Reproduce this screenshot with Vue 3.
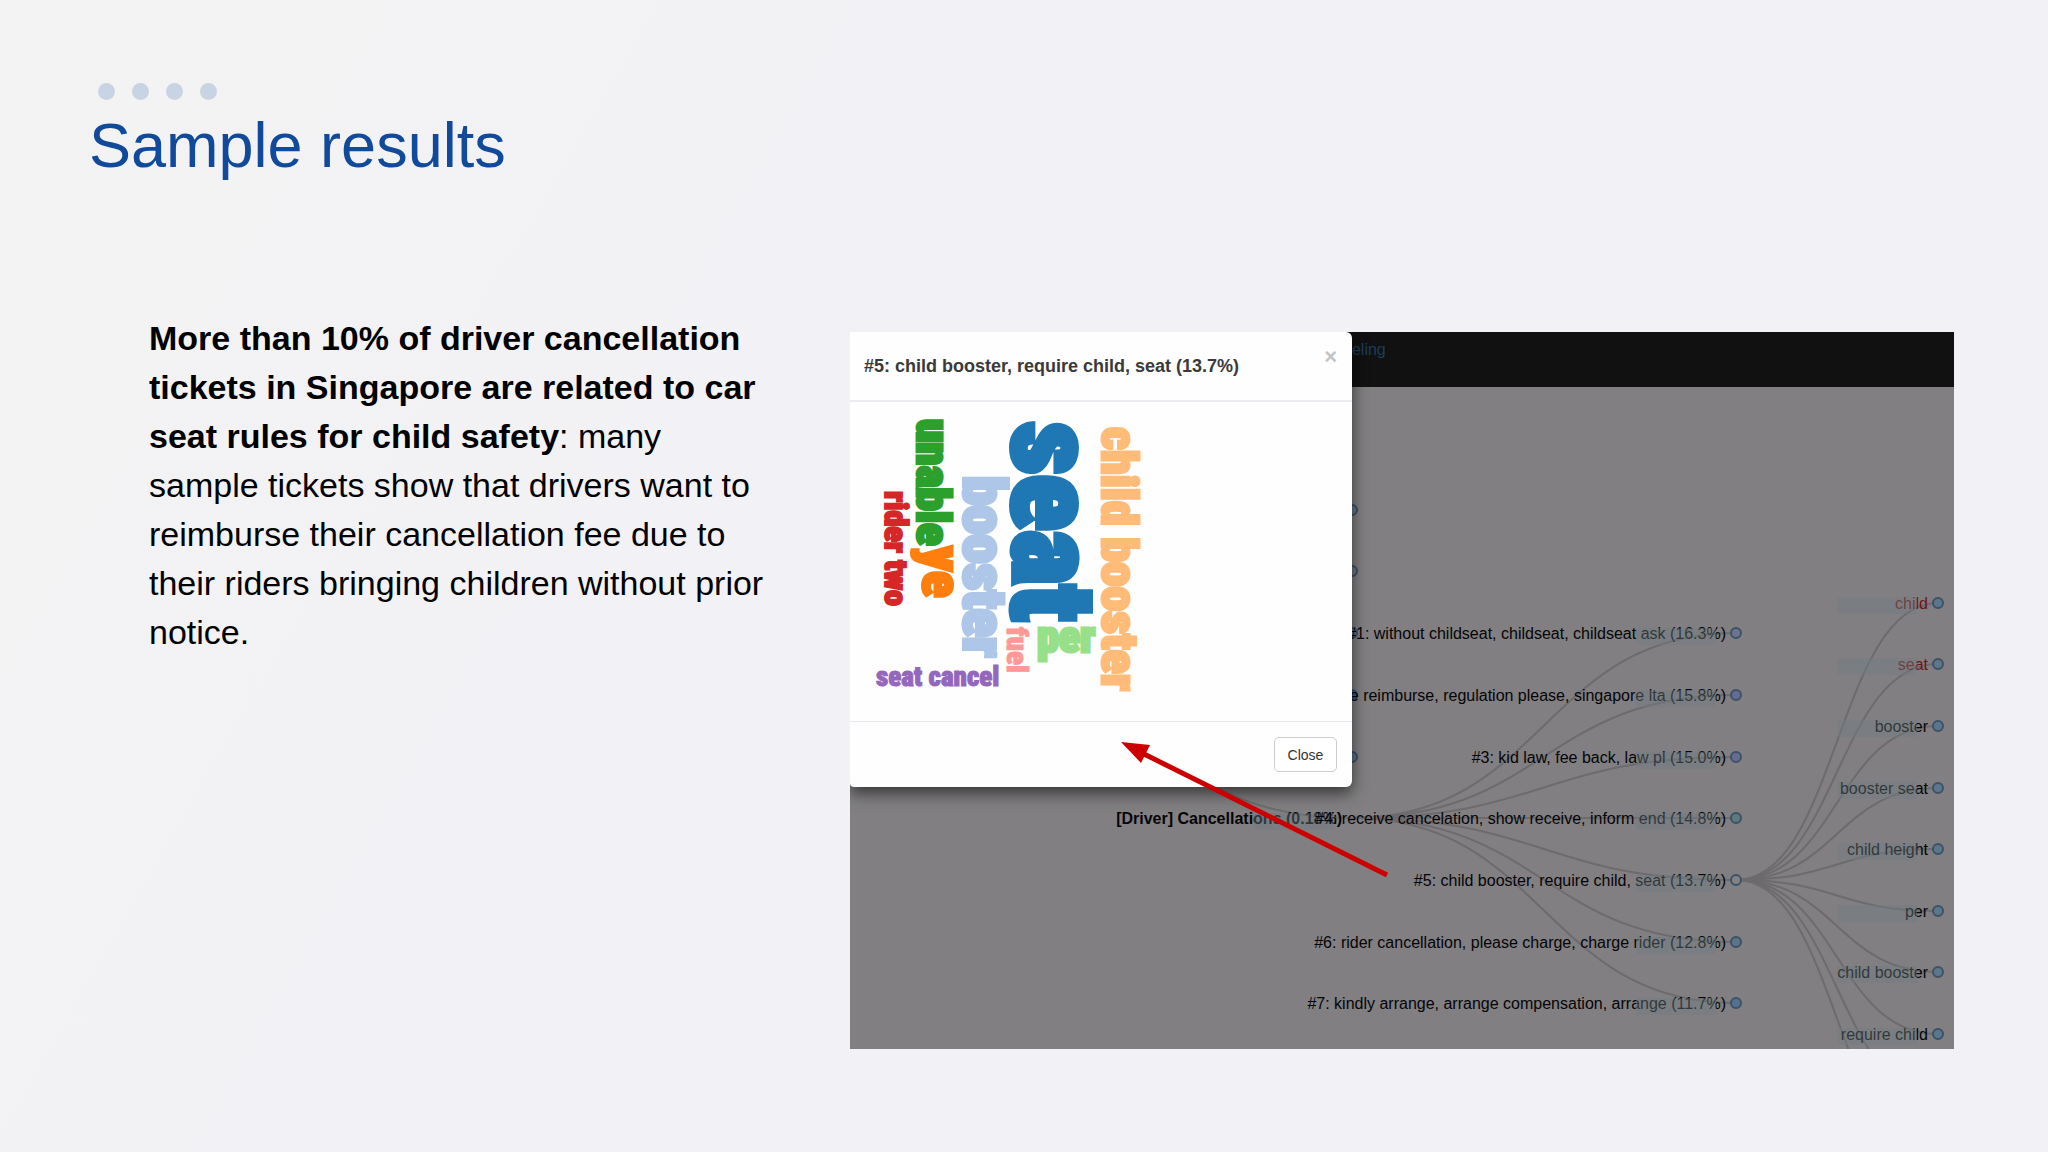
<script setup>
const topicX = 886
const termX = 1088
const groupX = 502
const groupY = 486

const topics = [
  { y: 301, label: '#1: without childseat, childseat, childseat ask (16.3%)', fill: '#6d7390' },
  { y: 363, label: '#2: fee reimburse, regulation please, singapore lta (15.8%)', fill: '#666b93' },
  { y: 425, label: '#3: kid law, fee back, law pl (15.0%)', fill: '#686c90' },
  { y: 486, label: '#4: receive cancelation, show receive, inform end (14.8%)', fill: '#5e7a7e' },
  { y: 548, label: '#5: child booster, require child, seat (13.7%)', fill: '#828184' },
  { y: 610, label: '#6: rider cancellation, please charge, charge rider (12.8%)', fill: '#5f7386' },
  { y: 671, label: '#7: kindly arrange, arrange compensation, arrange (11.7%)', fill: '#56708f' },
]

const terms = [
  { y: 271, label: 'child', hot: true },
  { y: 332, label: 'seat', hot: true },
  { y: 394, label: 'booster' },
  { y: 456, label: 'booster seat' },
  { y: 517, label: 'child height' },
  { y: 579, label: 'per' },
  { y: 640, label: 'child booster' },
  { y: 702, label: 'require child' },
]

const groups = [
  { y: 178, fill: '#6f7580' },
  { y: 239, fill: '#6f7580' },
  { y: 301, fill: '#6f7580' },
  { y: 363, fill: '#3d6186' },
  { y: 425, fill: '#5f7386' },
]

function link(x0, y0, x1, y1) {
  const mid = (x0 + x1) / 2
  return `M${x0} ${y0}C${mid} ${y0} ${mid} ${y1} ${x1} ${y1}`
}

const links = [
  link(118, 356, groupX, groupY),
  ...topics.map((t) => link(groupX, groupY, topicX, t.y)),
  ...[...terms.map((t) => t.y), 764, 825].map((y) => link(topicX, 548, termX, y)),
]

const words = [
  { text: 'seat', x: 163, y: 90, size: 116, stroke: 6, color: '#1f77b4', down: true },
  { text: 'booster', x: 114, y: 144, size: 59, stroke: 4, color: '#aec7e8', down: true },
  { text: 'ye', x: 73, y: 214, size: 55, stroke: 3, color: '#ff7f0e', down: true },
  { text: 'child booster', x: 252, y: 95, size: 50, stroke: 3, color: '#ffbb78', down: true },
  { text: 'unable', x: 67, y: 87, size: 47, stroke: 3, color: '#2ca02c', down: true },
  { text: 'per', x: 187, y: 320, size: 44, stroke: 3, color: '#98df8a' },
  { text: 'rider two', x: 35, y: 159, size: 32, stroke: 2, color: '#d62728', down: true },
  { text: 'fuel', x: 157, y: 295, size: 29, stroke: 1, color: '#ff9896', down: true },
  { text: 'seat cancel', x: 26, y: 354, size: 27, stroke: 1, color: '#9467bd' },
]
</script>

<template>
  <main class="slide">
    <header class="heading">
      <div class="dots" aria-hidden="true"><i v-for="n in 4" :key="n"></i></div>
      <h1>Sample results</h1>
    </header>

    <div class="content">
      <p class="copy">
        <strong>More than 10% of driver cancellation tickets in Singapore are related to car seat rules for child safety</strong>: many sample tickets show that drivers want to reimburse their cancellation fee due to their riders bringing children without prior notice.
      </p>

      <section class="demo">
        <nav class="navbar"><a href="#">Topic Modeling</a></nav>
        <svg class="tree" viewBox="0 55 1104 662" role="img" aria-label="Topic tree">
          <g class="links"><path v-for="d in links" :key="d" :d="d" /></g>
          <g v-for="g in groups" :key="g.y">
            <circle :cx="groupX" :cy="g.y" r="5" :fill="g.fill" />
          </g>
          <g>
            <text class="root" :x="groupX - 10" :y="groupY + 6">[Driver] Cancellations (0.18%)</text>
            <rect :x="groupX - 98" :y="groupY - 5" width="80" height="17" />
          </g>
          <g v-for="t in topics" :key="t.label">
            <text :x="topicX - 10" :y="t.y + 6">{{ t.label }}</text>
            <rect :x="topicX - 100" :y="t.y - 5" width="80" height="17" />
            <circle :cx="topicX" :cy="t.y" r="5" :fill="t.fill" />
          </g>
          <g v-for="t in terms" :key="t.label">
            <text :class="{ hot: t.hot }" :x="termX - 10" :y="t.y + 6">{{ t.label }}</text>
            <rect :x="termX - 101" :y="t.y - 6" width="80" height="17" />
            <circle :cx="termX" :cy="t.y" r="5" fill="#5c768c" />
          </g>
        </svg>

        <div class="modal" role="dialog" aria-labelledby="modal-title">
          <div class="modal-head">
            <h2 id="modal-title">#5: child booster, require child, seat (13.7%)</h2>
            <button class="dismiss" aria-label="Dismiss">×</button>
          </div>
          <svg class="cloud" viewBox="0 70 502 319" role="img" aria-label="Word cloud">
            <text
              v-for="w in words"
              :key="w.text"
              :transform="`translate(${w.x} ${w.y}) rotate(${w.down ? 90 : 0})`"
              :font-size="w.size"
              :fill="w.color"
              :stroke="w.color"
              :stroke-width="w.stroke"
            >{{ w.text }}</text>
          </svg>
          <div class="modal-foot"><button class="close">Close</button></div>
        </div>

        <svg class="arrow" viewBox="0 0 1104 717" aria-hidden="true">
          <path d="M537 543L294 422" stroke="#c00" stroke-width="5" />
          <path d="M271 410L300 413L291 431Z" fill="#c00" />
        </svg>
      </section>
    </div>
  </main>
</template>

<style>
body {
  margin: 0;
  background: #f2f1f6;
}
</style>

<style scoped>
.slide {
  box-sizing: border-box;
  min-height: 100vh;
  padding: 83px 94px 100px 89px;
  background: linear-gradient(120deg, #f3f3f3 0%, #f2f2f5 30%, #f2f1f6 40%);
  color: #000;
  font-family: "Liberation Sans", Arial, sans-serif;
}
.dots {
  display: flex;
  gap: 17px;
  padding-left: 9px;
}
.dots i {
  width: 17px;
  height: 17px;
  border-radius: 50%;
  background: #c8d3e3;
}
h1 {
  margin: 9px 0 0;
  color: #114a9b;
  font-size: 63px;
  font-weight: 400;
  line-height: 72px;
}
.content {
  display: flex;
  align-items: flex-start;
  gap: 79px;
  margin-top: 133px;
  padding-left: 60px;
}
.copy {
  flex: 0 1 622px;
  margin: 0;
  font-size: 34px;
  line-height: 49px;
}
.demo {
  position: relative;
  flex: 1 1 0;
  min-width: 0;
  margin-top: 18px;
  overflow: hidden;
  background: #817f81;
}
.navbar {
  box-sizing: border-box;
  height: 55px;
  padding: 9px 0 0 429px;
  background: #111112;
  font-size: 16px;
  line-height: 18px;
}
.navbar a {
  color: #1d3c5a;
  text-decoration: none;
}
.tree {
  display: block;
  width: 100%;
  font-size: 16px;
}
.tree text {
  fill: #050507;
  text-anchor: end;
}
.tree .root {
  font-weight: 700;
}
.tree .hot {
  fill: #6d1216;
}
.tree rect {
  fill: #6f7f83;
  opacity: 0.42;
}
.tree circle {
  stroke: #3c5266;
  stroke-width: 2;
}
.links path {
  fill: none;
  stroke: #6d6b6d;
  stroke-width: 2;
}
.modal {
  position: absolute;
  top: 0;
  left: 0;
  width: 502px;
  border-radius: 0 6px 6px 4px;
  background: #fefefe;
  box-shadow: 0 6px 16px rgba(0, 0, 0, 0.6);
}
.modal-head {
  display: flex;
  justify-content: space-between;
  box-sizing: border-box;
  height: 70px;
  padding: 12px 15px 12px 14px;
  border-bottom: 2px solid #ececf0;
}
h2 {
  margin: 12px 0 0;
  color: #3a3a3a;
  font-size: 18px;
  font-weight: 700;
  line-height: 20px;
}
.dismiss {
  align-self: flex-start;
  padding: 0;
  border: 0;
  background: none;
  color: #c4c4c6;
  font: 700 22px/26px "Liberation Sans", Arial, sans-serif;
}
.cloud {
  display: block;
  width: 100%;
  font-family: "Roboto Condensed", Impact, sans-serif;
  font-weight: 900;
}
.modal-foot {
  display: flex;
  justify-content: flex-end;
  padding: 15px;
  border-top: 1px solid #e5e5ea;
}
.close {
  width: 63px;
  height: 35px;
  padding: 0;
  border: 1px solid #ccc;
  border-radius: 5px;
  background: #fff;
  color: #333;
  font: 14px/20px "Liberation Sans", Arial, sans-serif;
}
.arrow {
  position: absolute;
  top: 0;
  left: 0;
  width: 100%;
  pointer-events: none;
}
</style>
